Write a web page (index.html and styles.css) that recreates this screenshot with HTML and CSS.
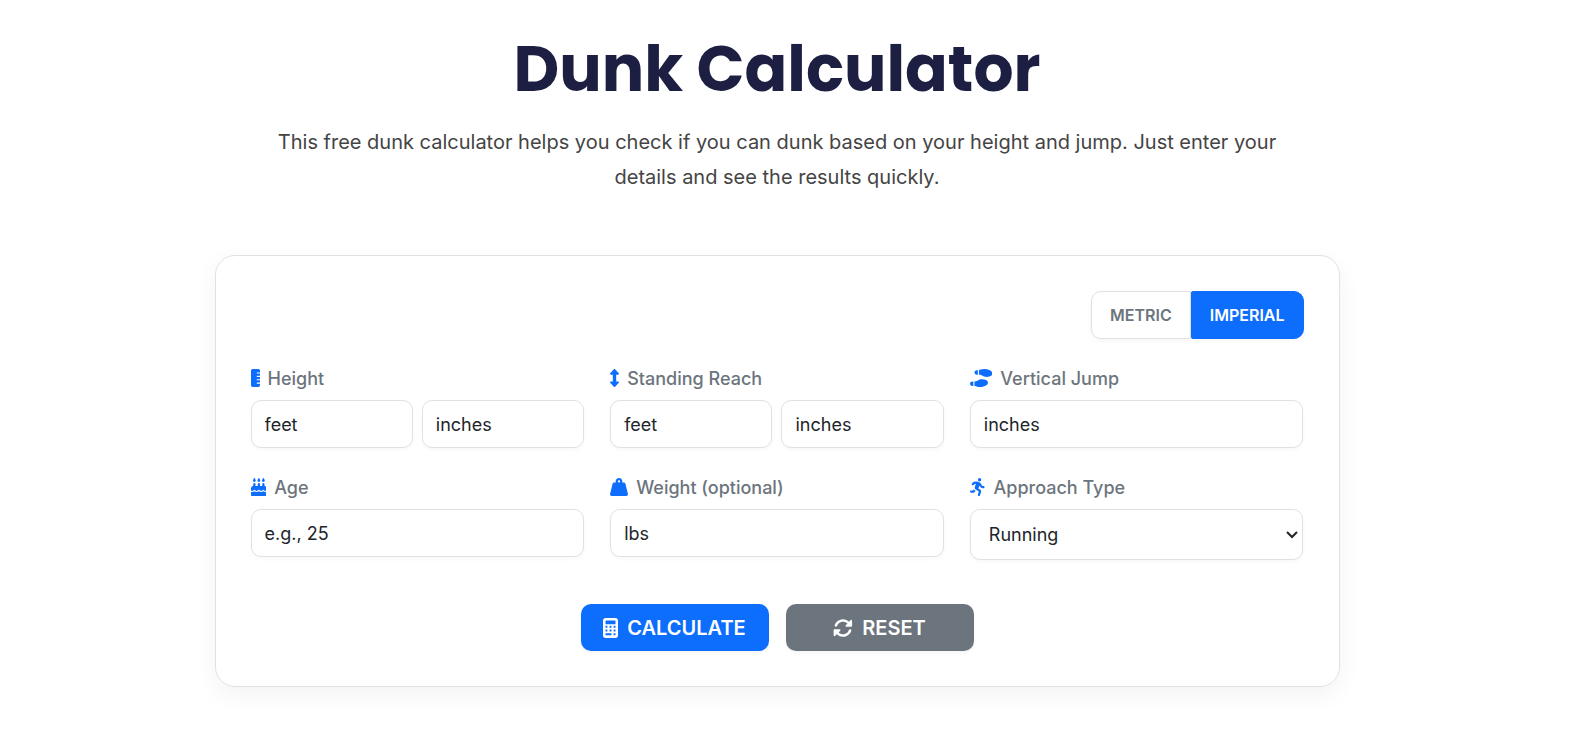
FILE: index.html
```
<!DOCTYPE html>
<html lang="en">
<head>
    <meta charset="UTF-8">
    <meta name="viewport" content="width=device-width, initial-scale=1.0">
    <title>Dunk Calculator</title>
    <link rel="stylesheet" href="styles.css">
</head>
<body>
    <header class="page-header">
        <h1>Dunk Calculator</h1>
        <p>This free dunk calculator helps you check if you can dunk based on your height and jump. Just enter your details and see the results quickly.</p>
    </header>

    <form class="calculator">
        <div class="unit-toggle">
            <button type="button" class="unit-btn">Metric</button>
            <button type="button" class="unit-btn active">Imperial</button>
        </div>

        <div class="form-grid">
            <div class="form-group">
                <label for="heightFeet">
                    <svg class="icon" viewBox="0 0 256 512"><path d="M0 48C0 21.500 21.500 0 48 0H208c26.500 0 48 21.500 48 48V96H176c-8.800 0-16 7.200-16 16s7.200 16 16 16h80v64H176c-8.800 0-16 7.200-16 16s7.200 16 16 16h80v64H176c-8.800 0-16 7.200-16 16s7.200 16 16 16h80v64H176c-8.800 0-16 7.200-16 16s7.200 16 16 16h80v48c0 26.500-21.500 48-48 48H48c-26.500 0-48-21.500-48-48V48z"/></svg>
                    Height
                </label>
                <div class="input-row">
                    <input type="text" id="heightFeet" placeholder="feet">
                    <input type="text" id="heightInches" placeholder="inches" aria-label="Height inches">
                </div>
            </div>

            <div class="form-group">
                <label for="reachFeet">
                    <svg class="icon" viewBox="0 0 256 512"><path d="M145.600 7.700C141 2.800 134.700 0 128 0s-13 2.800-17.600 7.700l-104 112c-6.500 7-8.200 17.200-4.400 25.900S14.500 160 24 160H80V352H24c-9.500 0-18.200 5.700-22 14.400s-2.100 18.900 4.400 25.900l104 112c4.500 4.900 10.900 7.700 17.600 7.700s13-2.800 17.600-7.700l104-112c6.500-7 8.200-17.200 4.400-25.900s-12.500-14.400-22-14.400H176V160h56c9.500 0 18.200-5.700 22-14.400s2.100-18.900-4.400-25.900l-104-112z"/></svg>
                    Standing Reach
                </label>
                <div class="input-row">
                    <input type="text" id="reachFeet" placeholder="feet">
                    <input type="text" id="reachInches" placeholder="inches" aria-label="Standing reach inches">
                </div>
            </div>

            <div class="form-group">
                <label for="verticalJump">
                    <svg class="icon" viewBox="0 0 640 512"><path d="M416 0C352.300 0 256 32 256 32V160c48 0 76 16 104 32s56 32 104 32c56.400 0 176-16 176-96S512 0 416 0zM128 96c0 35.300 28.700 64 64 64h32V32H192c-35.300 0-64 28.700-64 64zM288 512c96 0 224-48 224-128s-119.600-96-176-96c-48 0-76 16-104 32s-56 32-104 32V480s96.300 32 160 32zM0 416c0 35.300 28.700 64 64 64H96V352H64c-35.300 0-64 28.700-64 64z"/></svg>
                    Vertical Jump
                </label>
                <input type="text" id="verticalJump" placeholder="inches">
            </div>

            <div class="form-group">
                <label for="age">
                    <svg class="icon" viewBox="0 0 448 512"><path d="M86 5L62 48c-4 6-6 14-6 21v3a40 40 0 0 0 80 0v-3c0-7-2-15-6-21L106 5c-4-7-16-7-20 0zM214 5l-24 43c-4 6-6 14-6 21v3a40 40 0 0 0 80 0v-3c0-7-2-15-6-21L234 5c-4-7-16-7-20 0zM342 5l-24 43c-4 6-6 14-6 21v3a40 40 0 0 0 80 0v-3c0-7-2-15-6-21L362 5c-4-7-16-7-20 0zM128 176a32 32 0 0 0-64 0v48c-35 0-64 29-64 64v71c8 5 18 9 29 9 22 0 43-14 55-27 6-7 18-7 24 0 10 11 32 27 52 27s42-16 52-27c6-7 18-7 24 0 10 11 32 27 52 27s42-16 52-27c6-7 18-7 24 0 12 13 33 27 55 27 11 0 21-4 29-9v-71c0-35-29-64-64-64v-48a32 32 0 0 0-64 0v48h-64v-48a32 32 0 0 0-64 0v48h-64v-48zM448 395c-9 3-19 5-29 5-26 0-48-12-63-23-18 13-41 23-68 23-26 0-49-11-64-22-15 11-38 22-64 22-27 0-50-10-68-23-15 11-37 23-63 23-10 0-20-2-29-5v85c0 18 14 32 32 32h384c18 0 32-14 32-32v-85z"/></svg>
                    Age
                </label>
                <input type="text" id="age" placeholder="e.g., 25">
            </div>

            <div class="form-group">
                <label for="weight">
                    <svg class="icon" viewBox="0 0 512 512"><path fill-rule="evenodd" d="M224 96a32 32 0 1 1 64 0 32 32 0 1 1 -64 0zm122.500 32c3.500-10 5.500-20.800 5.500-32c0-53-43-96-96-96s-96 43-96 96c0 11.200 1.900 22 5.500 32H120c-22 0-41.200 15-46.600 36.400l-72 288c-3.600 14.300-.4 29.500 8.700 41.200S33.200 512 48 512H464c14.800 0 28.700-6.800 37.800-18.500s12.300-26.800 8.700-41.200l-72-288C433.200 143 414 128 392 128H346.500z"/></svg>
                    Weight (optional)
                </label>
                <input type="text" id="weight" placeholder="lbs">
            </div>

            <div class="form-group">
                <label for="approach">
                    <svg class="icon" viewBox="0 0 448 512"><path d="M320 48a48 48 0 1 0 -96 0 48 48 0 1 0 96 0zM125.700 175.500c9.900-9.900 23.400-15.500 37.500-15.500c1.900 0 3.800 .1 5.600 .3L137.600 254c-9.300 28 1.700 58.800 26.800 74.500l86.200 53.900-25.400 88.800c-4.900 17 5 34.700 22 39.600s34.700-5 39.600-22l28.700-100.400c5.900-20.600-2.600-42.600-20.700-53.900L238 299l30.900-82.400 5.100 12.300C289 264.700 323.900 288 362.700 288H384c17.700 0 32-14.300 32-32s-14.300-32-32-32H362.700c-12.900 0-24.600-7.800-29.500-19.700l-6.300-15c-14.600-35.100-44.100-61.900-80.500-73.100l-48.700-15c-11.100-3.400-22.700-5.200-34.400-5.200c-31 0-60.800 12.300-82.700 34.300L57.400 153.400c-12.500 12.500-12.500 32.800 0 45.300s32.800 12.500 45.300 0l23.100-23.100zM91.200 352H32c-17.700 0-32 14.300-32 32s14.300 32 32 32h69.600c19 0 36.200-11.200 43.900-28.500L157 361.600l-9.500-6c-17.500-10.900-30.500-26.800-37.900-44.900L91.200 352z"/></svg>
                    Approach Type
                </label>
                <div class="select-wrap">
                    <select id="approach">
                        <option>Running</option>
                        <option>Standing</option>
                    </select>
                    <svg class="chevron" viewBox="0 0 12 8"><path d="M1 1l5 5 5-5"/></svg>
                </div>
            </div>
        </div>

        <div class="button-container">
            <button type="button" class="btn btn-primary">
                <svg class="icon" viewBox="0 0 384 512"><path fill-rule="evenodd" d="M64 0C29 0 0 29 0 64v384c0 35 29 64 64 64h256c35 0 64-29 64-64V64c0-35-29-64-64-64H64zM80 64h224a16 16 0 0 1 16 16v64a16 16 0 0 1-16 16H80a16 16 0 0 1-16-16V80a16 16 0 0 1 16-16zM64 200h48v48H64zM168 200h48v48h-48zM272 200h48v48h-48zM64 296h48v48H64zM168 296h48v48h-48zM272 296h48v48h-48zM64 392h152v48H64zM272 392h48v48h-48z"/></svg>
                Calculate
            </button>
            <button type="reset" class="btn btn-secondary">
                <svg class="icon" viewBox="0 0 512 512"><path d="M142.900 142.900c62.200-62.200 162.700-62.500 225.300-1L327 183c-6.900 6.900-8.900 17.200-5.200 26.200s12.500 14.800 22.200 14.800H463.500c13.300 0 24.500-10.700 24.500-24V72c0-9.700-5.800-18.500-14.800-22.200s-19.300-1.700-26.200 5.200L413.400 96.600c-87.600-86.500-228.700-86.200-315.800 1C73.200 122 55.600 150.700 44.800 181.400c-5.900 16.700 2.900 34.900 19.500 40.800s34.900-2.900 40.800-19.500c7.700-21.800 20.200-42.300 37.800-59.800zM16 312v128c0 9.700 5.800 18.500 14.800 22.200s19.300 1.700 26.200-5.200l41.600-41.600c87.600 86.500 228.700 86.200 315.800-1 24.400-24.400 42.100-53.100 52.900-83.700 5.900-16.700-2.900-34.900-19.500-40.800s-34.900 2.900-40.800 19.500c-7.700 21.800-20.200 42.300-37.800 59.800-62.200 62.200-162.700 62.500-225.300 1L185 329c6.900-6.900 8.900-17.200 5.200-26.200s-12.500-14.800-22.200-14.800H40c-13.300 0-24 10.700-24 24z"/></svg>
                Reset
            </button>
        </div>
    </form>
</body>
</html>
```

FILE: styles.css
```
* {
    box-sizing: border-box;
}

body {
    font-family: Inter, "Liberation Sans", sans-serif;
    color: #212529;
    background-color: #fff;
    margin: 0;
    padding: 29px 22px 30px 0;
}

.page-header {
    max-width: 1054px;
    margin: 0 auto 60px;
    text-align: center;
}

h1 {
    font-family: Poppins, Inter, sans-serif;
    font-size: 63px;
    font-weight: 700;
    line-height: 80px;
    color: #1c1e42;
    margin: 0 0 16px;
}

.page-header p {
    font-size: 20px;
    line-height: 35px;
    color: #444;
    margin: 0;
}

.calculator {
    max-width: 1125px;
    margin: 0 auto;
    padding: 35px;
    border: 1px solid #dee2e6;
    border-radius: 20px;
    box-shadow: 0 8px 24px rgba(0, 0, 0, 0.05);
}

.unit-toggle {
    display: flex;
    justify-content: flex-end;
    margin-bottom: 26px;
}

.unit-btn {
    height: 48px;
    padding: 0 18px;
    border: 1px solid #dee2e6;
    border-radius: 10px 0 0 10px;
    background-color: #fff;
    color: #6c757d;
    font-family: inherit;
    font-size: 16px;
    font-weight: 600;
    text-transform: uppercase;
    box-shadow: 0 2px 4px rgba(0, 0, 0, 0.04);
    cursor: pointer;
}

.unit-btn.active {
    border-color: #0d6efd;
    border-radius: 2px 10px 10px 2px;
    background-color: #0d6efd;
    color: #fff;
}

.form-grid {
    display: grid;
    grid-template-columns: repeat(3, 1fr);
    gap: 26px;
}

label {
    display: flex;
    align-items: center;
    gap: 8px;
    height: 26px;
    margin-bottom: 9px;
    font-size: 18px;
    font-weight: 500;
    color: #6c757d;
}

.icon {
    height: 18px;
    fill: currentColor;
}

label .icon {
    color: #0d6efd;
}

.input-row {
    display: grid;
    grid-template-columns: 1fr 1fr;
    gap: 9px;
}

input, select {
    width: 100%;
    height: 48px;
    padding: 0 13px;
    border: 1px solid #dee2e6;
    border-radius: 10px;
    background-color: #fff;
    color: #212529;
    font-family: inherit;
    font-size: 18px;
    box-shadow: 0 2px 4px rgba(0, 0, 0, 0.03);
}

input::placeholder {
    color: #212529;
}

.select-wrap {
    position: relative;
}

select {
    display: block;
    height: 51px;
    padding: 0 18px;
    appearance: none;
}

.chevron {
    position: absolute;
    top: 22px;
    right: 5px;
    width: 12px;
    height: 8px;
    fill: none;
    stroke: #212529;
    stroke-width: 2;
    pointer-events: none;
}

.button-container {
    display: flex;
    justify-content: center;
    gap: 17px;
    margin-top: 44px;
}

.btn {
    display: flex;
    align-items: center;
    justify-content: center;
    gap: 9px;
    width: 188px;
    height: 47px;
    border: none;
    border-radius: 10px;
    color: #fff;
    font-family: inherit;
    font-size: 20px;
    font-weight: 600;
    text-transform: uppercase;
    box-shadow: 0 2px 4px rgba(0, 0, 0, 0.04);
    cursor: pointer;
}

.btn .icon {
    height: 20px;
}

.btn-primary {
    background-color: #0d6efd;
}

.btn-secondary {
    background-color: #6c757d;
}
```
